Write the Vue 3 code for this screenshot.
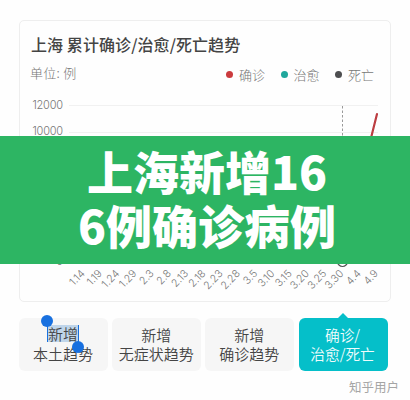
<script setup>
const dates = ['1.14', '1.19', '1.24', '1.29', '2.3', '2.8', '2.13', '2.18', '2.23', '2.28', '3.5', '3.10', '3.15', '3.20', '3.25', '3.30', '4.4', '4.9']
const labels = dates.map((text, i) => ({ text, transform: `translate(${85.5 + i * 17.25} 178) rotate(-46)` }))
const legend = [
  { name: '确诊', kind: 'confirmed' },
  { name: '治愈', kind: 'cured' },
  { name: '死亡', kind: 'dead' },
]
const tabs = [
  { lines: ['新增', '本土趋势'], selected: true },
  { lines: ['新增', '无症状趋势'] },
  { lines: ['新增', '确诊趋势'] },
  { lines: ['确诊/', '治愈/死亡'], active: true },
]
</script>

<template>
  <main class="page">
    <section class="card">
      <h1 class="title">上海 累计确诊/治愈/死亡趋势</h1>
      <div class="meta">
        <span class="unit">单位: 例</span>
        <ul class="legend">
          <li v-for="item in legend" :key="item.name"><i :class="item.kind"></i>{{ item.name }}</li>
        </ul>
      </div>
      <svg class="chart" viewBox="20 96 370 204" width="370" height="204">
        <path class="grid" d="M69 105.500H378M69 132.500H378" />
        <g class="values">
          <text x="63" y="109" textLength="30.500">12000</text>
          <text x="63" y="135" textLength="30.500">10000</text>
          <text x="63" y="264.500">0</text>
        </g>
        <path class="guide" d="M342.500 106V262" />
        <path class="trend" d="M366 157L371.500 136L377 114" />
        <circle class="marker" cx="342.500" cy="261.500" r="5" />
        <g class="dates" transform="translate(0 96)">
          <text v-for="label in labels" :key="label.text" :transform="label.transform">{{ label.text }}</text>
        </g>
      </svg>
    </section>

    <nav class="tabs">
      <button v-for="tab in tabs" :key="tab.lines[1]" class="tab" :class="{ active: tab.active }">
        <span :class="{ selection: tab.selected }">{{ tab.lines[0] }}</span>
        <span>{{ tab.lines[1] }}</span>
      </button>
    </nav>
    <footer class="credit">知乎用户</footer>

    <div class="banner">上海新增16<br>6例确诊病例</div>
  </main>
</template>

<style>
body { background: #fefefe; }
</style>

<style scoped>
.page {
  position: relative;
  box-sizing: border-box;
  width: 410px;
  height: 400px;
  padding: 20px 19px 0;
  overflow: hidden;
  font-family: "Noto Sans CJK SC", sans-serif;
}
.card {
  box-sizing: border-box;
  width: 372px;
  height: 282px;
  border: 1.5px solid #eee;
  border-radius: 5px;
  overflow: hidden;
}
.title {
  margin: 11px 0 0 11px;
  font-size: 16px;
  line-height: 24px;
  font-weight: 500;
  letter-spacing: 0.080px;
  color: #444;
  white-space: nowrap;
}
.meta {
  display: flex;
  justify-content: space-between;
  align-items: center;
  height: 20px;
  margin: 6px 16px 0 10px;
  font-size: 13px;
  font-weight: 300;
  color: #777;
}
.unit { letter-spacing: 0.300px; }
.legend {
  display: flex;
  gap: 16px;
  margin: 5px 0 0;
  padding: 0;
  list-style: none;
}
.legend li { display: flex; align-items: center; }
.legend i {
  width: 7px;
  height: 7px;
  margin: 0 5.500px 0 0;
  border-radius: 50%;
}
.confirmed { background: #cb3b3e; }
.cured { background: #20a79c; }
.dead { background: #4d4e50; }
.chart { display: block; margin-top: 14px; }
.grid { fill: none; stroke: #f1f1f1; stroke-width: 1; }
.values { font: 300 11px Inter, sans-serif; fill: #777; text-anchor: end; }
.guide { stroke: #999; stroke-width: 1; stroke-dasharray: 2.500 2; }
.trend { fill: none; stroke: #bc3e42; stroke-width: 2.200; stroke-linecap: round; }
.marker { fill: #fff; stroke: #555; stroke-width: 1.200; }
.dates { font: 300 10.500px Inter, sans-serif; fill: #777; text-anchor: end; }
.tabs { display: grid; grid-template-columns: repeat(4, 89px); gap: 4.200px; margin-top: 16px; }
.tab {
  position: relative;
  display: flex;
  flex-direction: column;
  align-items: center;
  box-sizing: border-box;
  height: 53px;
  padding: 6.500px 1px 0 0;
  border: 0;
  border-radius: 6px;
  background: #f6f6f6;
  color: #444;
  font: 350 15px/19.500px "Noto Sans CJK SC", sans-serif;
  white-space: nowrap;
}
.tab.active { background: #05bfc9; color: #effcfc; font-size: 14.700px; }
.tab.active::before {
  content: "";
  position: absolute;
  top: -5px;
  left: 39px;
  border: solid transparent;
  border-width: 0 5.500px 5px;
  border-bottom-color: #05bfc9;
}
.selection {
  position: relative;
  z-index: 1;
  height: 17px;
  margin-bottom: 2.500px;
  background: #bfd5ea;
  box-shadow: -1px 0 #1870df, 1px 0 #1870df;
  line-height: 17px;
}
.selection::before, .selection::after {
  content: "";
  position: absolute;
  z-index: 1;
  width: 12px;
  height: 12px;
  border-radius: 50%;
  background: #1870df;
}
.selection::before { top: -10px; left: -7px; }
.selection::after { right: -6px; bottom: -11px; }
.credit {
  margin: 6px 0 0;
  text-align: right;
  font-size: 12.500px;
  line-height: 20px;
  color: #a5a5a5;
  transform: translateX(8px);
}
.banner {
  position: absolute;
  top: 136px;
  left: 0;
  box-sizing: border-box;
  width: 410px;
  height: 128px;
  padding: 7px 0 0 4px;
  background: #2db563;
  color: #fff;
  text-align: center;
  font-size: 46px;
  font-weight: 900;
  line-height: 54px;
}
</style>
